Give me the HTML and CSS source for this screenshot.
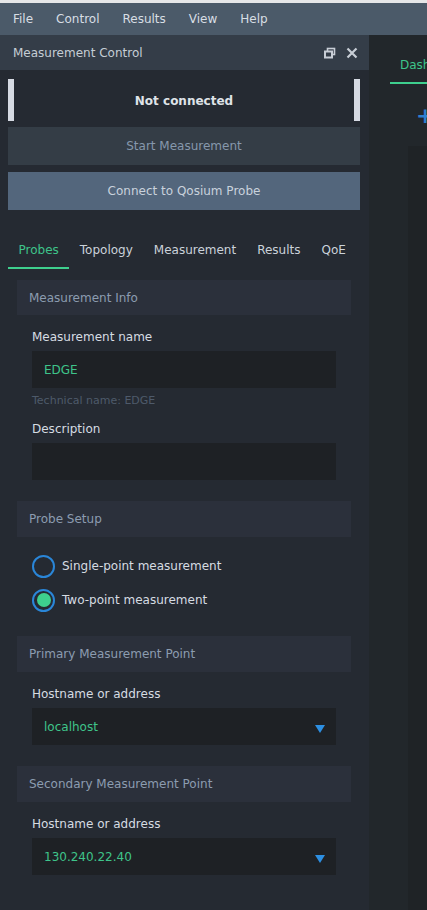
FILE: index.html
```html
<!DOCTYPE html>
<html>
<head>
<meta charset="utf-8">
<link rel="stylesheet" href="styles.css">
</head>
<body>
<div class="topstrip"></div>
<div class="menubar">
  <span class="menu">File</span>
  <span class="menu">Control</span>
  <span class="menu">Results</span>
  <span class="menu">View</span>
  <span class="menu">Help</span>
</div>
<div class="main">
  <div class="dock">
    <div class="titlebar">
      <span class="title">Measurement Control</span>
      <span class="ticons">
        <svg width="12" height="12" viewBox="0 0 12 12"><rect x="3.5" y="1.5" width="7" height="6" fill="none" stroke="#c8ced6" stroke-width="1.6"/><rect x="1" y="4.5" width="7" height="6" fill="#343d48" stroke="#c8ced6" stroke-width="2"/></svg>
        <svg width="12" height="12" viewBox="0 0 12 12"><path d="M1.5 1.5 L10.5 10.5 M10.5 1.5 L1.5 10.5" stroke="#c8ced6" stroke-width="2.2"/></svg>
      </span>
    </div>
    <div class="body">
      <div class="status"><span>Not connected</span></div>
      <div class="btn btn-start">Start Measurement</div>
      <div class="btn btn-connect">Connect to Qosium Probe</div>
      <div class="tabs">
        <span class="tab active">Probes</span>
        <span class="tab">Topology</span>
        <span class="tab">Measurement</span>
        <span class="tab">Results</span>
        <span class="tab">QoE</span>
      </div>
      <div class="section first">
        <div class="shead">Measurement Info</div>
        <div class="sbody">
          <div class="label">Measurement name</div>
          <div class="input">EDGE</div>
          <div class="hint">Technical name: EDGE</div>
          <div class="label">Description</div>
          <div class="input"></div>
        </div>
      </div>
      <div class="section">
        <div class="shead">Probe Setup</div>
        <div class="sbody radios">
          <div class="radio"><span class="circle"></span><span>Single-point measurement</span></div>
          <div class="radio"><span class="circle checked"></span><span>Two-point measurement</span></div>
        </div>
      </div>
      <div class="section">
        <div class="shead">Primary Measurement Point</div>
        <div class="sbody">
          <div class="label">Hostname or address</div>
          <div class="input select"><span>localhost</span><span class="arrow"></span></div>
        </div>
      </div>
      <div class="section">
        <div class="shead">Secondary Measurement Point</div>
        <div class="sbody">
          <div class="label">Hostname or address</div>
          <div class="input select"><span>130.240.22.40</span><span class="arrow"></span></div>
        </div>
      </div>
    </div>
  </div>
  <div class="side">
    <div class="sidetabs"><span class="sidetab">Dash</span></div>
    <div class="plus">+</div>
    <div class="sidepane"></div>
  </div>
</div>
</body>
</html>
```

FILE: styles.css
```css
* { box-sizing: border-box; }
html, body {
  margin: 0;
  padding: 0;
  width: 427px;
  height: 910px;
  overflow: hidden;
  background: #252a32;
  font-family: "DejaVu Sans", sans-serif;
  font-size: 12px;
}
.topstrip { height: 3px; background: #e6e7e8; }
.menubar {
  height: 32px;
  background: #4b5a69;
  display: flex;
  align-items: center;
  padding-left: 13px;
  color: #d8dee4;
}
.menu { margin-right: 23px; }
.main { display: flex; height: 875px; }
.dock { width: 369px; flex: none; background: #252a32; }
.titlebar {
  height: 35px;
  background: #343d48;
  display: flex;
  align-items: center;
  padding: 0 11px 0 13px;
  color: #c5cdd5;
}
.title { flex: 1; }
.ticons { display: flex; gap: 10px; align-items: center; }
.body { padding: 9px 9px 0 8px; }
.status {
  height: 42px;
  border-left: 6px solid #d6dae3;
  border-right: 6px solid #d6dae3;
  display: flex;
  align-items: center;
  justify-content: center;
  color: #dfe3e8;
  font-weight: bold;
  padding-top: 1px;
}
.btn {
  height: 38px;
  display: flex;
  align-items: center;
  justify-content: center;
}
.btn-start { margin-top: 6px; background: #343d46; color: #8698ac; }
.btn-connect { margin-top: 7px; background: #53667c; color: #c9d2dc; }
.tabs { margin-top: 22px; height: 37px; display: flex; }
.tab {
  padding: 0 10.5px;
  display: flex;
  align-items: center;
  color: #cbd2da;
  border-bottom: 2px solid transparent;
}
.tab.active { color: #3ec48a; border-bottom-color: #3ecf8e; }
.section { margin: 21px 9px 0 9px; }
.section.first { margin-top: 11px; }
.shead {
  height: 36px;
  background: #2b303b;
  color: #8c9cb0;
  display: flex;
  align-items: center;
  padding-left: 12px;
}
.section.first .shead { height: 35px; }
.sbody { padding: 15px 15px 0 15px; }
.label { color: #d6dce2; line-height: 15px; margin-bottom: 6px; }
.input {
  height: 37px;
  background: #1e2125;
  color: #3ec48a;
  display: flex;
  align-items: center;
  padding-left: 12px;
}
.hint { color: #4e5a6a; font-size: 11px; line-height: 14px; margin: 6px 0 14px 0; }
.select { justify-content: space-between; padding-right: 11px; }
.arrow {
  width: 0; height: 0;
  border-left: 5px solid transparent;
  border-right: 5px solid transparent;
  border-top: 8px solid #2d8fe2;
  margin-top: 4px;
}
.radios { padding-top: 14px; padding-bottom: 0; display: flex; flex-direction: column; gap: 4px; }
.radio { display: flex; align-items: center; color: #d6dce2; height: 30px; }
.circle {
  width: 23px; height: 23px;
  border: 2px solid #2a86d8;
  border-radius: 50%;
  margin-right: 7px;
  display: flex;
  align-items: center;
  justify-content: center;
}
.circle.checked::after {
  content: "";
  width: 14px; height: 14px;
  border-radius: 50%;
  background: #3ecf8e;
}
.side { flex: 1; background: #22272b; position: relative; overflow: hidden; }
.sidetabs { height: 49px; margin-left: 21px; display: flex; }
.sidetab {
  color: #3ec48a;
  padding: 12px 10px 0 10px;
  width: 60px;
  display: flex;
  align-items: center;
  border-bottom: 2px solid #3ecf8e;
  white-space: nowrap;
  height: 49px;
  flex: none;
}
.plus { color: #2d7fd0; font-size: 22px; margin-left: 47px; margin-top: 21px; height: 22px; line-height: 22px; font-weight: bold; }
.sidepane { position: absolute; left: 39px; top: 111px; right: 0; bottom: 0; background: #1f2326; }
```
